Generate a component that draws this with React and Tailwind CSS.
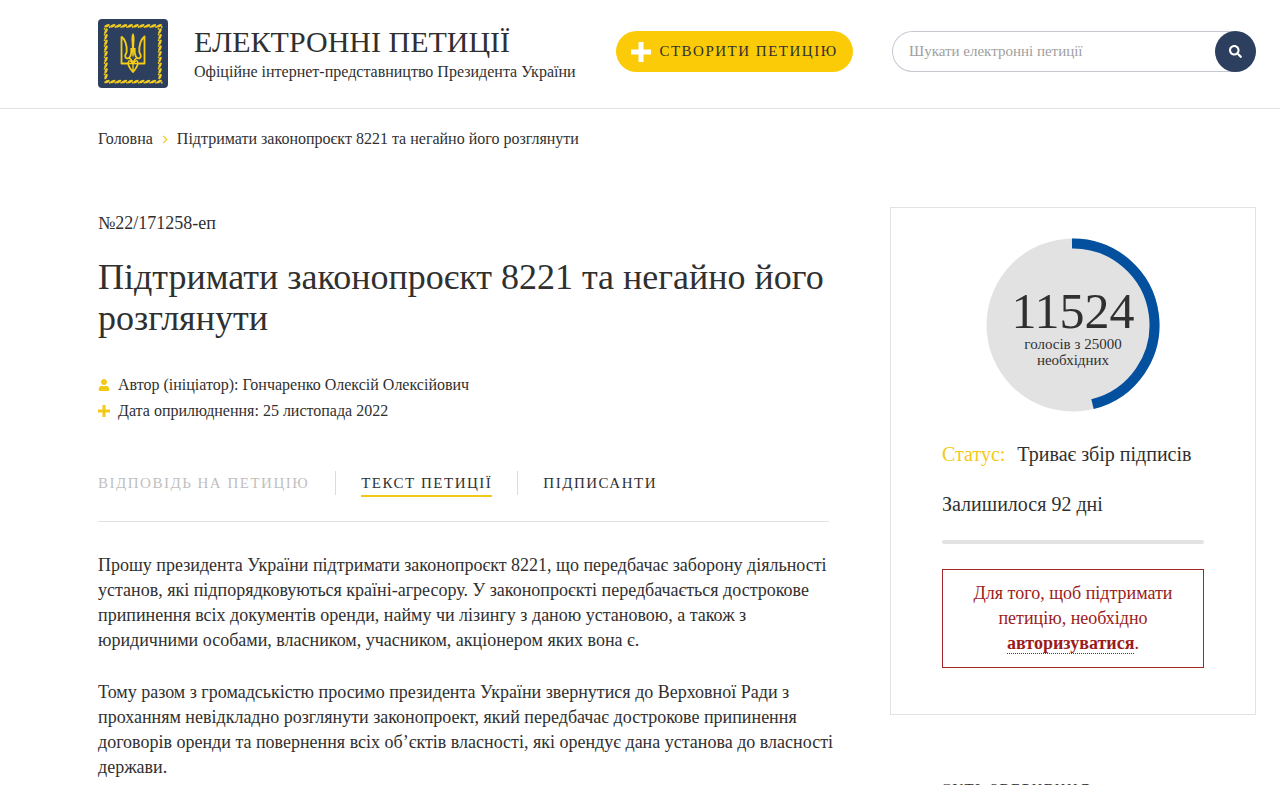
import React from 'react';
import { FaSearch, FaUser } from 'react-icons/fa';

const horizontal = [9, 14.8, 20.6, 26.4, 32.2, 38, 43.8, 49.6, 55.4, 61.2];
const vertical = [12, 17.7, 23.4, 29.1, 34.8, 40.5, 46.2, 51.9, 57.6];

function Emblem() {
  return (
    <svg viewBox="0 0 70 69" className="h-[69px] w-[70px] shrink-0" role="img" aria-label="Герб">
      <rect width="70" height="69" rx="4" fill="#2d3f5f" />
      <g fill="#f2cc1e">
        {horizontal.map((x) => (
          <g key={x}>
            <ellipse cx={x} cy="6.8" rx="3" ry="1.300" transform={`rotate(-24 ${x} 6.8)`} />
            <circle cx={x + 2.6} cy="8" r="0.9" />
            <ellipse cx={x} cy="62.5" rx="3" ry="1.300" transform={`rotate(-24 ${x} 62.5)`} />
            <circle cx={x + 2.6} cy="63.7" r="0.9" />
          </g>
        ))}
        {vertical.map((y) => (
          <g key={y}>
            <ellipse cx="8" cy={y} rx="1.300" ry="3" transform={`rotate(26 8 ${y})`} />
            <circle cx="6.6" cy={y - 2.2} r="0.9" />
            <ellipse cx="62" cy={y} rx="1.300" ry="3" transform={`rotate(26 62 ${y})`} />
            <circle cx="60.6" cy={y - 2.2} r="0.9" />
          </g>
        ))}
      </g>
      <g transform="translate(22 14)" fill="none" stroke="#f6cd13" strokeWidth="1.800" strokeLinejoin="round">
        <path d="M1.500 3.500V30.500H8.200C8.500 34 11 36.500 13 39C15 36.500 17.500 34 17.800 30.500H24.500V3.500C20.500 7 19 12 19.300 18.500C19.400 20.500 20.800 21 20.800 23C20.800 25 19 26 17.200 25C15 23.800 14.500 20 14.700 15M1.500 3.500C5.500 7 7 12 6.700 18.500C6.600 20.500 5.200 21 5.200 23C5.200 25 7 26 8.800 25C11 23.800 11.500 20 11.300 15" />
        <path d="M8.200 30.500C8 27 10.500 26.500 13 31C15.500 26.500 18 27 17.800 30.500M8.200 30.500H17.800M8.800 25C10.500 25.500 12.500 28 13 31C13.500 28 15.500 25.500 17.200 25M13 30V38" strokeWidth="1.400" />
        <path d="M13 0C11.200 2 11.300 6 11.700 10L12.200 22L13 25L13.800 22L14.300 10C14.700 6 14.800 2 13 0Z" fill="#f6cd13" stroke="none" />
      </g>
    </svg>
  );
}

function Header() {
  return (
    <header className="flex h-[109px] items-start border-b border-[#e3e3e3] pr-6 pl-[98px]">
      <a href="#home" className="mt-[19px] flex flex-1 items-start gap-[26px]">
        <Emblem />
        <span className="flex flex-col pt-1">
          <span className="text-[30px] leading-[38px] whitespace-nowrap">ЕЛЕКТРОННІ ПЕТИЦІЇ</span>
          <span className="text-[16px] leading-[22px] whitespace-nowrap">
            Офіційне інтернет-представництво Президента України
          </span>
        </span>
      </a>
      <button
        type="button"
        className="mt-[31px] flex h-[41px] w-[237px] items-center justify-center gap-2 rounded-full bg-[#fccb07] text-[15px] tracking-widest whitespace-nowrap"
      >
        <svg viewBox="0 0 20 20" className="size-5" aria-hidden="true">
          <path d="M10 0V20M0 10H20" stroke="#fff" strokeWidth="5" />
        </svg>
        СТВОРИТИ ПЕТИЦІЮ
      </button>
      <form className="mt-[31px] ml-[39px] flex h-[41px] w-[364px]">
        <input
          type="search"
          aria-label="Шукати електронні петиції"
          placeholder="Шукати електронні петиції"
          className="-mr-5 min-w-0 flex-1 rounded-l-full border border-r-0 border-[#c5c8cf] pr-6 pl-4 text-[15px] outline-none placeholder:text-[#a0a0a0]"
        />
        <button
          type="button"
          aria-label="Пошук"
          className="relative flex size-[41px] items-center justify-center rounded-full bg-[#2d3f5f]"
        >
          <FaSearch className="size-[13px] text-white" />
        </button>
      </form>
    </header>
  );
}

function Tabs() {
  return (
    <nav className="mt-[47px] flex items-start border-b border-[#e3e3e3] pb-[26px] text-[15px] leading-6 tracking-widest whitespace-nowrap">
      <button type="button" disabled className="border-r border-[#dcdcdc] pr-[26px] text-[#bfbfbf]">
        ВІДПОВІДЬ НА ПЕТИЦІЮ
      </button>
      <div className="h-6 border-r border-[#dcdcdc] px-[25px]">
        <button type="button" className="block border-b-2 border-[#f3c917]">
          ТЕКСТ ПЕТИЦІЇ
        </button>
      </div>
      <button type="button" className="pl-[25px]">
        ПІДПИСАНТИ
      </button>
    </nav>
  );
}

function VoteCounter() {
  return (
    <div className="mx-auto grid size-[174px] place-items-center">
      <svg viewBox="0 0 174 174" className="col-start-1 row-start-1 size-full" aria-hidden="true">
        <circle cx="87" cy="87" r="86.500" fill="#e2e2e2" />
        <path d="M86 5.500A81.500 81.500 0 0 1 106.500 166.130" fill="none" stroke="#03509f" strokeWidth="10" />
      </svg>
      <div className="col-start-1 row-start-1 flex flex-col items-center pt-1 text-center">
        <strong className="text-[50px] leading-[50px] font-normal">11524</strong>
        <span className="w-28 text-[15px] leading-4">голосів з 25000 необхідних</span>
      </div>
    </div>
  );
}

function Sidebar() {
  return (
    <aside className="w-[366px] shrink-0">
      <section className="border border-[#e3e3e3] px-[51px] pt-[30px] pb-[46px]">
        <VoteCounter />
        <p className="mt-7 flex gap-3 text-[20px] leading-7 whitespace-nowrap">
          <span className="text-[#f3c917]">Статус:</span>
          <span>Триває збір підписів</span>
        </p>
        <p className="mt-[22px] text-[20px] leading-7">Залишилося 92 дні</p>
        <div className="mt-[22px] h-1 rounded-full bg-[#e2e2e2]" />
        <p className="mt-[25px] border border-[#a3272a] px-5 py-[11px] text-center text-[18px] leading-[25px] text-[#9b1c1a]">
          Для того, щоб підтримати петицію, необхідно{' '}
          <a href="#login" className="border-b border-dotted border-[#9b1c1a] font-bold">
            авторизуватися
          </a>
          .
        </p>
      </section>
      <h2 className="mt-[62px] pl-[51px] text-[15px] leading-6 tracking-widest">СУТЬ ЗВЕРНЕННЯ</h2>
    </aside>
  );
}

export default function App() {
  return (
    <div className="h-screen overflow-hidden bg-white font-['Georgia','Liberation_Serif',serif] text-[#303030]">
      <Header />
      <nav aria-label="Навігація" className="flex items-center gap-[9px] pt-[19px] pl-[98px] text-[16px] leading-[22px]">
        <a href="#home">Головна</a>
        <svg viewBox="0 0 6 10" className="h-[9px] w-1.5" aria-hidden="true">
          <path d="M1 1L5 5L1 9" fill="none" stroke="#f3c917" strokeWidth="1.300" />
        </svg>
        <span>Підтримати законопроєкт 8221 та негайно його розглянути</span>
      </nav>
      <div className="mt-[57px] flex gap-[61px] pr-6 pl-[98px]">
        <main className="min-w-0 flex-1">
          <p className="mt-1 text-[18px] leading-6">№22/171258-еп</p>
          <h1 className="mt-[22px] text-[36px] leading-[41px]">
            Підтримати законопроєкт 8221 та негайно його розглянути
          </h1>
          <ul className="mt-[33px] text-[16px] leading-[26px]">
            <li className="flex items-center gap-2">
              <FaUser className="size-3 text-[#f3c917]" />
              Автор (ініціатор): Гончаренко Олексій Олексійович
            </li>
            <li className="flex items-center gap-2">
              <svg viewBox="0 0 12 12" className="size-3" aria-hidden="true">
                <path d="M6 .5V11.500M.5 6H11.500" stroke="#f3c917" strokeWidth="3" strokeLinecap="round" />
              </svg>
              Дата оприлюднення: 25 листопада 2022
            </li>
          </ul>
          <Tabs />
          <article className="mt-[31px] -mr-3 flex flex-col gap-[27px] text-[18px] leading-[25px]">
            <p>
              Прошу президента України підтримати законопроєкт 8221, що передбачає заборону діяльності установ, які
              підпорядковуються країні-агресору. У законопроєкті передбачається дострокове припинення всіх документів
              оренди, найму чи лізингу з даною установою, а також з юридичними особами, власником, учасником,
              акціонером яких вона є.
            </p>
            <p>
              Тому разом з громадськістю просимо президента України звернутися до Верховної Ради з проханням
              невідкладно розглянути законопроект, який передбачає дострокове припинення договорів оренди та
              повернення всіх об’єктів власності, які орендує дана установа до власності держави.
            </p>
          </article>
        </main>
        <Sidebar />
      </div>
    </div>
  );
}
